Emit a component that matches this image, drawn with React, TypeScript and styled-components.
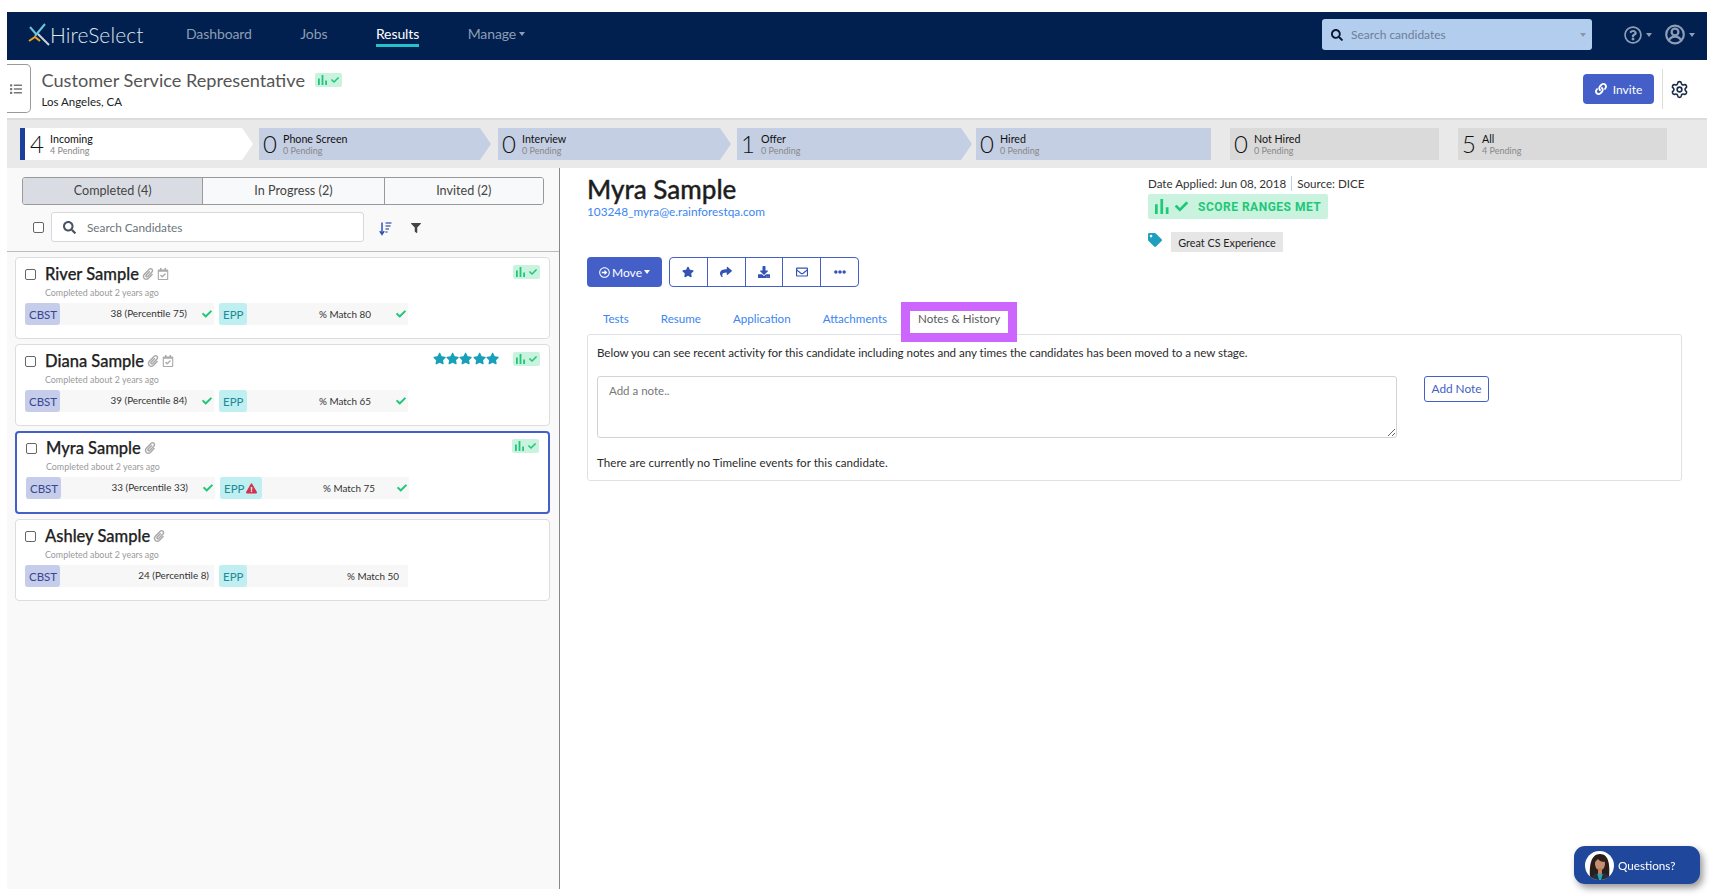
import React from 'react'
import styled, { createGlobalStyle } from 'styled-components'
import {
  FaCheck, FaDownload, FaEllipsisH, FaExclamationTriangle, FaFilter, FaLink,
  FaList, FaPaperclip, FaRegArrowAltCircleRight, FaRegCalendarCheck, FaRegEnvelope,
  FaRegQuestionCircle, FaSearch, FaShare, FaStar, FaTag,
} from 'react-icons/fa'
import { Settings } from 'lucide-react'

const Global = createGlobalStyle`
  body { margin: 0; background: #fff; font-family: Lato, "Open Sans", sans-serif; color: #222; }
  * { box-sizing: border-box; }
`

const Page = styled.div`
  margin: 12px 0 0 7px;
  width: 1700px;
  height: 877px;
  display: flex;
  flex-direction: column;
`

const Navbar = styled.nav`
  height: 48px;
  flex: none;
  background: #01204f;
  display: flex;
  align-items: center;
  padding: 0 0 3px 21px;
`
const Logo = styled.div`
  width: 158px;
  display: flex;
  align-items: center;
  color: #dfe6ee;
  font-size: 21px;
  font-weight: 300;
  letter-spacing: 0.1px;
`
const NavLinks = styled.div`
  display: flex;
  gap: 48.5px;
`
const NavLink = styled.a<{ $active?: boolean }>`
  font-size: 14px;
  line-height: 18px;
  letter-spacing: -0.1px;
  color: ${p => (p.$active ? '#fff' : '#8d9db5')};
  padding-bottom: 1px;
  border-bottom: 3px solid ${p => (p.$active ? '#26c2c9' : 'transparent')};
  margin-top: 2px;
  display: flex;
  align-items: center;
`
const Caret = styled.span<{ $color?: string }>`
  display: inline-block;
  width: 0;
  height: 0;
  margin-left: 3px;
  border-left: 3.5px solid transparent;
  border-right: 3.5px solid transparent;
  border-top: 4px solid ${p => p.$color || '#8d9db5'};
`
const NavSearch = styled.div`
  margin-left: auto;
  width: 270px;
  height: 31px;
  border-radius: 3px;
  background: #b3cdee;
  display: flex;
  align-items: center;
  padding: 0 6px 0 9px;
  gap: 8px;
  font-size: 12px;
  color: #6e7f97;
  svg { color: #0b1a30; font-size: 12px; }
  ${Caret} { margin-left: auto; }
`
const NavTools = styled.div`
  width: 115px;
  display: flex;
  align-items: center;
  padding-left: 32px;
  color: #8d9db5;
`
const ToolIcon = styled.span<{ $size: number; $gap: number }>`
  display: flex;
  align-items: center;
  font-size: ${p => p.$size}px;
  margin-right: ${p => p.$gap}px;
  ${Caret} { margin-left: 4px; }
`

const JobHeader = styled.header`
  height: 60px;
  flex: none;
  border-bottom: 2px solid #dcdcdc;
  display: flex;
  align-items: flex-start;
  padding: 4px 18px 0 0;
`
const MenuTab = styled.div`
  width: 24px;
  height: 49px;
  border: 1px solid #999;
  border-left: none;
  border-radius: 0 5px 5px 0;
  display: flex;
  align-items: center;
  justify-content: center;
  padding-right: 5px;
  color: #777;
  font-size: 12px;
`
const JobTitleBlock = styled.div`
  margin-left: 10.5px;
  padding-top: 4px;
`
const JobTitleRow = styled.div`
  display: flex;
  align-items: center;
  gap: 10px;
`
const JobTitle = styled.h1`
  margin: 0;
  font-size: 18.15px;
  line-height: 24px;
  font-weight: 400;
  color: #555;
`
const JobPlace = styled.div`
  font-size: 11.5px;
  line-height: 15px;
  margin-top: 2px;
`
const InviteArea = styled.div`
  margin-left: auto;
  display: flex;
  align-items: center;
  height: 40px;
  margin-top: 5px;
`
const InviteButton = styled.button`
  width: 71px;
  height: 30px;
  border: none;
  border-radius: 4px;
  background: #4460c8;
  color: #fff;
  font: 12px Lato, sans-serif;
  display: flex;
  align-items: center;
  justify-content: center;
  gap: 6px;
`
const GearCell = styled.div`
  margin-left: 8px;
  height: 40px;
  width: 27px;
  border-left: 1px solid #ddd;
  display: flex;
  align-items: center;
  justify-content: flex-end;
  color: #1a2c48;
`

const StageBar = styled.div`
  height: 48px;
  flex: none;
  background: #e9e9e9;
  display: flex;
  align-items: center;
  padding-left: 13px;
`
const Stage = styled.div<{ $w: number; $gap: number; $bg: string; $arrow?: boolean; $first?: boolean }>`
  width: ${p => p.$w}px;
  height: 32px;
  margin-right: ${p => p.$gap}px;
  background: ${p => p.$bg};
  flex: none;
  display: flex;
  align-items: center;
  padding-left: ${p => (p.$first ? 2 : 1)}px;
  border-left: ${p => (p.$first ? '5px solid #1c3f9c' : 'none')};
  clip-path: ${p =>
    p.$arrow ? 'polygon(0 0, calc(100% - 11px) 0, 100% 50%, calc(100% - 11px) 100%, 0 100%)' : 'none'};
`
const StageCount = styled.div`
  width: 20px;
  font-size: 24px;
  font-weight: 300;
  color: #111;
  text-align: center;
  line-height: 32px;
`
const StageText = styled.div`
  margin-left: 3px;
  padding-top: 1px;
`
const StageName = styled.div`
  font-size: 10.7px;
  line-height: 13px;
  color: #111;
`
const StagePending = styled.div`
  font-size: 9px;
  line-height: 12px;
  color: #888;
`

const Main = styled.div`
  flex: 1;
  display: flex;
  min-height: 0;
`
const Sidebar = styled.aside`
  width: 553px;
  flex: none;
  background: #f9f9f9;
  border-right: 1px solid #888;
`
const FilterTabs = styled.div`
  margin: 9px 0 0 15px;
  width: 522px;
  height: 28px;
  display: flex;
  border: 1px solid #999;
  border-radius: 3px;
  overflow: hidden;
`
const FilterTab = styled.div<{ $w: number; $active?: boolean }>`
  width: ${p => p.$w}px;
  font-size: 12.6px;
  padding-bottom: 2px;
  display: flex;
  align-items: center;
  justify-content: center;
  color: #444;
  background: ${p => (p.$active ? '#d9dde3' : '#f8f9fa')};
  & + & { border-left: 1px solid #999; }
`
const SearchRow = styled.div`
  height: 47px;
  padding: 7px 0 0 26px;
  border-bottom: 1px solid #bbb;
  display: flex;
  align-items: flex-start;
`
const Check = styled.input.attrs({ type: 'checkbox' })`
  appearance: none;
  width: 11px;
  height: 11px;
  margin: 0;
  flex: none;
  background: #fff;
  border: 1px solid #666;
  border-radius: 2px;
`
const SearchBox = styled.div`
  margin-left: 7px;
  width: 313px;
  height: 30px;
  background: #fff;
  border: 1px solid #d5d8dc;
  border-radius: 3px;
  display: flex;
  align-items: center;
  padding-left: 11px;
  gap: 11px;
  color: #4a5460;
  font-size: 11.8px;
  svg { font-size: 13px; }
  span { color: #6c757d; }
`
const ListTool = styled.div<{ $ml: number; $mt: number }>`
  margin: ${p => p.$mt}px 0 0 ${p => p.$ml}px;
  display: flex;
  color: #444;
  font-size: 10px;
`
const CardList = styled.div`
  padding: 5px 0 0 8px;
  display: flex;
  flex-direction: column;
  gap: 5px;
`
const Card = styled.div<{ $selected?: boolean }>`
  width: 535px;
  height: ${p => (p.$selected ? 83 : 82)}px;
  background: #fff;
  border: ${p => (p.$selected ? '2px solid #4460c8' : '1px solid #ddd')};
  border-radius: 4px;
  padding: ${p => (p.$selected ? '5px 9px 0' : '6px 9px 0')};
`
const CardTop = styled.div`
  height: 20px;
  display: flex;
  align-items: center;
  ${Check} { margin-top: 1px; }
`
const CardName = styled.div`
  margin-left: 9px;
  font-size: 16.5px;
  font-weight: 500;
  -webkit-text-stroke: 0.25px #222;
  color: #222;
`
const CardClip = styled.span`
  margin-left: 3px;
  color: #aaa;
  font-size: 12px;
  display: flex;
`
const CardStars = styled.div`
  margin-left: auto;
  margin-right: 14px;
  margin-bottom: 4px;
  display: flex;
  color: #18a0ba;
  font-size: 13.2px;
`
const RangeBadge = styled.div<{ $auto?: boolean; $lift?: boolean }>`
  width: 27px;
  height: 14px;
  border-radius: 2px;
  background: #c9f2df;
  color: #1ec878;
  display: flex;
  align-items: center;
  justify-content: center;
  gap: 3px;
  margin-left: ${p => (p.$auto ? 'auto' : 0)};
  margin-bottom: ${p => (p.$lift ? 4 : 0)}px;
`
const CardWhen = styled.div`
  margin: 2px 0 0 20px;
  font-size: 8.9px;
  line-height: 13px;
  color: #9a9a9a;
`
const Scores = styled.div`
  margin-top: 4px;
  display: flex;
  gap: 5px;
`
const ScoreRow = styled.div`
  width: 189px;
  height: 22px;
  background: #f7f7f7;
  display: flex;
  align-items: center;
`
const ScoreTag = styled.div<{ $bg: string; $color: string; $w: number }>`
  width: ${p => p.$w}px;
  height: 22px;
  flex: none;
  border-radius: 3px;
  background: ${p => p.$bg};
  color: ${p => p.$color};
  font-size: 11.5px;
  display: flex;
  align-items: center;
  padding-left: 4px;
  gap: 2px;
  svg { color: #d9304a; font-size: 11px; }
`
const ScoreText = styled.div<{ $end: number; $up?: boolean }>`
  margin-left: auto;
  margin-right: ${p => p.$end}px;
  margin-bottom: ${p => (p.$up ? 3 : 0)}px;
  font-size: 9.9px;
  color: #333;
`
const ScoreCheck = styled.span`
  display: flex;
  margin-right: 2px;
  color: #1ec878;
  font-size: 10px;
`

const Detail = styled.section`
  flex: 1;
  min-width: 0;
  padding: 0 26px 0 27px;
`
const DetailHead = styled.div`
  height: 84px;
  display: flex;
`
const Person = styled.div`
  width: 561px;
  padding-top: 4px;
`
const PersonName = styled.h2`
  margin: 0;
  font-size: 26px;
  line-height: 34px;
  font-weight: 500;
  -webkit-text-stroke: 0.35px #1e1e1e;
  color: #1e1e1e;
`
const PersonMail = styled.a`
  display: block;
  margin-top: -2px;
  font-size: 11.8px;
  line-height: 16px;
  color: #3a86f2;
`
const Meta = styled.div`
  padding-top: 8px;
`
const MetaLine = styled.div`
  display: flex;
  font-size: 11.6px;
  line-height: 15px;
  color: #333;
  span + span { margin-left: 5px; padding-left: 5px; border-left: 1px solid #b3d4ee; }
`
const ScoreBanner = styled.div`
  margin-top: 3px;
  width: 180px;
  height: 25px;
  border-radius: 2px;
  background: #c9f2df;
  color: #1ec878;
  display: flex;
  align-items: center;
  padding-left: 7px;
  gap: 5px;
  font: 700 12px Roboto, sans-serif;
  letter-spacing: 0.5px;
`
const BannerText = styled.span`
  margin-left: 5px;
`
const TagRow = styled.div`
  margin-top: 13px;
  display: flex;
  align-items: flex-start;
`
const TagIcon = styled.span`
  display: flex;
  margin-top: 1px;
  color: #1d9fbd;
  font-size: 14px;
`
const TagChip = styled.div`
  margin-left: 9px;
  width: 112px;
  height: 20px;
  background: #e6e6e6;
  font-size: 10.8px;
  display: flex;
  align-items: center;
  justify-content: center;
  color: #222;
`
const Actions = styled.div`
  margin-top: 5px;
  display: flex;
  gap: 7px;
`
const MoveButton = styled.button`
  width: 75px;
  height: 30px;
  border: none;
  border-radius: 4px;
  background: #4460c8;
  color: #fff;
  font: 12px Lato, sans-serif;
  display: flex;
  align-items: center;
  justify-content: center;
  gap: 2px;
  svg { font-size: 11px; }
  ${Caret} { margin-left: 0; }
`
const ActionGroup = styled.div`
  width: 190px;
  height: 30px;
  display: flex;
  border: 1px solid #4460c8;
  border-radius: 4px;
`
const ActionCell = styled.div`
  flex: 1;
  display: flex;
  align-items: center;
  justify-content: center;
  color: #3553b5;
  font-size: 12px;
  & + & { border-left: 1px solid #4460c8; }
`
const Tabs = styled.div`
  margin-top: 24px;
  height: 22px;
  display: flex;
  position: relative;
  z-index: 1;
`
const Tab = styled.a<{ $active?: boolean }>`
  height: 22px;
  padding: 0 ${p => (p.$active ? 8 : 16)}px;
  margin-left: ${p => (p.$active ? 7 : 0)}px;
  font-size: 11.6px;
  line-height: 16px;
  color: ${p => (p.$active ? '#5a5a5a' : '#3a86f2')};
  background: ${p => (p.$active ? '#fff' : 'transparent')};
  outline: ${p => (p.$active ? '9px solid #cc66ff' : 'none')};
`
const Panel = styled.div`
  margin-top: 1px;
  width: 1095px;
  height: 147px;
  border: 1px solid #dee2e6;
  border-radius: 3px;
  padding: 10px 10px 0 9px;
`
const PanelText = styled.p`
  margin: 0;
  font-size: 11.6px;
  line-height: 15px;
  letter-spacing: -0.04px;
  color: #2b2b2b;
`
const EmptyText = styled(PanelText)`
  letter-spacing: 0.03px;
`
const NoteRow = styled.div`
  margin: 16px 0 17px;
  display: flex;
  gap: 27px;
`
const NoteInput = styled.textarea`
  width: 800px;
  height: 62px;
  flex: none;
  border: 1px solid #ced4da;
  border-radius: 3px;
  padding: 7px 11px;
  font: 11.5px Lato, sans-serif;
  resize: both;
  outline: none;
  &::placeholder { color: #777; }
`
const NoteButton = styled.button`
  width: 65px;
  height: 26px;
  background: #fff;
  border: 1px solid #4460c8;
  border-radius: 3px;
  color: #4460c8;
  font: 11.8px Lato, sans-serif;
  padding: 0 0 2px;
`
const ChatButton = styled.button`
  position: fixed;
  left: 1574px;
  top: 846px;
  width: 126px;
  height: 38px;
  border: none;
  border-radius: 11px;
  background: #1f479c;
  box-shadow: 3px 4px 7px rgba(0, 0, 0, 0.4);
  color: #fff;
  font: 11.7px Lato, sans-serif;
  display: flex;
  align-items: center;
  padding: 0 0 0 11px;
  gap: 4px;
`

function HireMark() {
  return (
    <svg width="22" height="24" viewBox="0 0 22 24" fill="none" strokeWidth="2">
      <path d="M2 4l6 7" stroke="#6cc5d8" />
      <path d="M17 1L7 13" stroke="#6cc5d8" />
      <path d="M1 18l6-4 5 4" stroke="#f0a020" />
      <path d="M10 11l11 11" stroke="#c9d3de" />
    </svg>
  )
}

function Bars({ size = 10 }: { size?: number }) {
  return (
    <svg width={size} height={size} viewBox="0 0 10 10" fill="currentColor">
      <rect x="0" y="3.5" width="1.8" height="6.5" />
      <rect x="3.6" y="0" width="1.8" height="10" />
      <rect x="7.2" y="5.5" width="1.8" height="4.5" />
    </svg>
  )
}

function SortIcon() {
  return (
    <svg width="13" height="14" viewBox="0 0 13 14">
      <path d="M3 0.5v11M0.8 9.2L3 12.5l2.2-3.3" fill="none" stroke="#3553b5" strokeWidth="1.5" />
      <path d="M6.5 1h6M6.5 4h5M6.5 7h3.5M6.5 10h2" stroke="#5a6fb8" strokeWidth="1.4" />
    </svg>
  )
}

function UserIcon() {
  return (
    <svg width="20" height="21" viewBox="0 0 20 21" fill="none" stroke="currentColor" strokeWidth="2.2">
      <circle cx="10" cy="10.5" r="8.8" />
      <circle cx="10" cy="8" r="3.4" />
      <path d="M3.8 17c1-3 3.4-4.3 6.2-4.3s5.2 1.3 6.2 4.3" />
    </svg>
  )
}

function Avatar() {
  return (
    <svg width="29" height="29" viewBox="0 0 29 29">
      <defs>
        <clipPath id="face-round"><circle cx="14.5" cy="14.5" r="14.5" /></clipPath>
      </defs>
      <circle cx="14.5" cy="14.5" r="14.5" fill="#fff" />
      <g clipPath="url(#face-round)">
        <path d="M5 27C4 14 6 3 15 3s10 11 9 24z" fill="#2a1d1a" />
        <path d="M10 29l2-6h6l3 6z" fill="#2fa3b5" />
        <path d="M6 29c0-4 3-6 6-7l2 7zM25 29c0-4-3-6-7-7l-2 7z" fill="#23303c" />
        <ellipse cx="15" cy="13" rx="5" ry="6.2" fill="#c58f70" />
        <rect x="13" y="17" width="4" height="6" fill="#b98165" />
        <path d="M10 11c1-4 4-5 6-5s3 2 4 5c-3 0-6-1-7-3-1 1-2 2-3 3z" fill="#2a1d1a" />
      </g>
    </svg>
  )
}

const stages = [
  { n: 4, name: 'Incoming', pending: 4, w: 233, gap: 6, bg: '#fff', arrow: true, first: true },
  { n: 0, name: 'Phone Screen', pending: 0, w: 232, gap: 7, bg: '#c5cfe3', arrow: true },
  { n: 0, name: 'Interview', pending: 0, w: 233, gap: 6, bg: '#c5cfe3', arrow: true },
  { n: 1, name: 'Offer', pending: 0, w: 235, gap: 4, bg: '#c5cfe3', arrow: true },
  { n: 0, name: 'Hired', pending: 0, w: 235, gap: 19, bg: '#c5cfe3' },
  { n: 0, name: 'Not Hired', pending: 0, w: 209, gap: 19, bg: '#dadada' },
  { n: 5, name: 'All', pending: 4, w: 209, gap: 0, bg: '#dadada' },
]

const candidates = [
  { name: 'River Sample', score: '38 (Percentile 75)', match: 80, passed: true, range: true, calendar: true },
  { name: 'Diana Sample', score: '39 (Percentile 84)', match: 65, passed: true, range: true, calendar: true, stars: true },
  { name: 'Myra Sample', score: '33 (Percentile 33)', match: 75, passed: true, range: true, selected: true, warn: true },
  { name: 'Ashley Sample', score: '24 (Percentile 8)', match: 50 },
]

export default function App() {
  return (
    <Page>
      <Global />
      <Navbar>
        <Logo><HireMark />HireSelect</Logo>
        <NavLinks>
          <NavLink>Dashboard</NavLink>
          <NavLink>Jobs</NavLink>
          <NavLink $active>Results</NavLink>
          <NavLink>Manage<Caret /></NavLink>
        </NavLinks>
        <NavSearch><FaSearch />Search candidates<Caret $color="#8a97a8" /></NavSearch>
        <NavTools>
          <ToolIcon $size={18} $gap={13}><FaRegQuestionCircle /><Caret /></ToolIcon>
          <ToolIcon $size={20} $gap={0}><UserIcon /><Caret /></ToolIcon>
        </NavTools>
      </Navbar>

      <JobHeader>
        <MenuTab><FaList /></MenuTab>
        <JobTitleBlock>
          <JobTitleRow>
            <JobTitle>Customer Service Representative</JobTitle>
            <RangeBadge><Bars /><FaCheck size={8} /></RangeBadge>
          </JobTitleRow>
          <JobPlace>Los Angeles, CA</JobPlace>
        </JobTitleBlock>
        <InviteArea>
          <InviteButton><FaLink size={12} />Invite</InviteButton>
          <GearCell><Settings size={19} strokeWidth={2} /></GearCell>
        </InviteArea>
      </JobHeader>

      <StageBar>
        {stages.map(s => (
          <Stage key={s.name} $w={s.w} $gap={s.gap} $bg={s.bg} $arrow={s.arrow} $first={s.first}>
            <StageCount>{s.n}</StageCount>
            <StageText>
              <StageName>{s.name}</StageName>
              <StagePending>{s.pending} Pending</StagePending>
            </StageText>
          </Stage>
        ))}
      </StageBar>

      <Main>
        <Sidebar>
          <FilterTabs>
            <FilterTab $w={180} $active>Completed (4)</FilterTab>
            <FilterTab $w={182}>In Progress (2)</FilterTab>
            <FilterTab $w={160}>Invited (2)</FilterTab>
          </FilterTabs>
          <SearchRow>
            <Check style={{ marginTop: 10 }} />
            <SearchBox><FaSearch /><span>Search Candidates</span></SearchBox>
            <ListTool $ml={15} $mt={10}><SortIcon /></ListTool>
            <ListTool $ml={19} $mt={11}><FaFilter /></ListTool>
          </SearchRow>
          <CardList>
            {candidates.map(c => (
              <Card key={c.name} $selected={c.selected}>
                <CardTop>
                  <Check />
                  <CardName>{c.name}</CardName>
                  <CardClip><FaPaperclip /></CardClip>
                  {c.calendar && <CardClip><FaRegCalendarCheck /></CardClip>}
                  {c.stars && (
                    <CardStars>
                      <FaStar /><FaStar /><FaStar /><FaStar /><FaStar />
                    </CardStars>
                  )}
                  {c.range && <RangeBadge $auto={!c.stars} $lift><Bars /><FaCheck size={8} /></RangeBadge>}
                </CardTop>
                <CardWhen>Completed about 2 years ago</CardWhen>
                <Scores>
                  <ScoreRow>
                    <ScoreTag $w={35} $bg="#c5cdeb" $color="#38478f">CBST</ScoreTag>
                    <ScoreText $end={c.passed ? 15 : 5} $up>{c.score}</ScoreText>
                    {c.passed && <ScoreCheck><FaCheck /></ScoreCheck>}
                  </ScoreRow>
                  <ScoreRow>
                    <ScoreTag $w={c.warn ? 42 : 28} $bg="#bfeff0" $color="#1f8a96">
                      EPP{c.warn && <FaExclamationTriangle />}
                    </ScoreTag>
                    <ScoreText $end={c.passed ? (c.warn ? 22 : 25) : 9}>% Match {c.match}</ScoreText>
                    {c.passed && <ScoreCheck><FaCheck /></ScoreCheck>}
                  </ScoreRow>
                </Scores>
              </Card>
            ))}
          </CardList>
        </Sidebar>

        <Detail>
          <DetailHead>
            <Person>
              <PersonName>Myra Sample</PersonName>
              <PersonMail>103248_myra@e.rainforestqa.com</PersonMail>
            </Person>
            <Meta>
              <MetaLine><span>Date Applied: Jun 08, 2018</span><span>Source: DICE</span></MetaLine>
              <ScoreBanner>
                <Bars size={15} /><FaCheck size={13} />
                <BannerText>SCORE RANGES MET</BannerText>
              </ScoreBanner>
              <TagRow>
                <TagIcon><FaTag /></TagIcon>
                <TagChip>Great CS Experience</TagChip>
              </TagRow>
            </Meta>
          </DetailHead>

          <Actions>
            <MoveButton><FaRegArrowAltCircleRight />Move<Caret $color="#fff" /></MoveButton>
            <ActionGroup>
              <ActionCell><FaStar /></ActionCell>
              <ActionCell><FaShare /></ActionCell>
              <ActionCell><FaDownload /></ActionCell>
              <ActionCell><FaRegEnvelope /></ActionCell>
              <ActionCell><FaEllipsisH /></ActionCell>
            </ActionGroup>
          </Actions>

          <Tabs>
            <Tab>Tests</Tab>
            <Tab>Resume</Tab>
            <Tab>Application</Tab>
            <Tab>Attachments</Tab>
            <Tab $active>Notes &amp; History</Tab>
          </Tabs>
          <Panel>
            <PanelText>Below you can see recent activity for this candidate including notes and any times the candidates has been moved to a new stage.</PanelText>
            <NoteRow>
              <NoteInput placeholder="Add a note.." />
              <NoteButton>Add Note</NoteButton>
            </NoteRow>
            <EmptyText>There are currently no Timeline events for this candidate.</EmptyText>
          </Panel>
        </Detail>
      </Main>

      <ChatButton><Avatar />Questions?</ChatButton>
    </Page>
  )
}
